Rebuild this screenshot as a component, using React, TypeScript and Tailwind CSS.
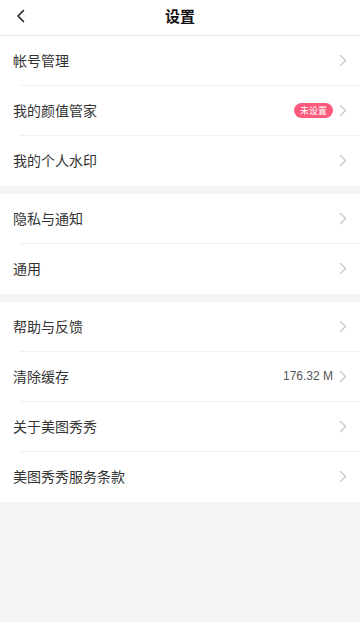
import React from 'react';

const font = { fontFamily: '"Noto Sans CJK SC", "Noto Sans", sans-serif' };

function Chevron() {
  return (
    <svg width="8" height="13" viewBox="0 0 8 13" fill="none" className="shrink-0">
      <path d="M1.5 1.5L6.5 6.5L1.5 11.5" stroke="#c8c8c8" strokeWidth="1.4" strokeLinecap="round" strokeLinejoin="round" />
    </svg>
  );
}

type Item = { label: string; extra?: React.ReactNode };

function Row({ item, last }: { item: Item; last: boolean }) {
  return (
    <div className="relative flex h-[50px] items-center pb-[2px] pl-[13px] pr-[13px]">
      <span className="flex-1 text-[14px] text-[#333]">{item.label}</span>
      {item.extra}
      <div className="ml-[6px]"><Chevron /></div>
      {!last && <div className="absolute bottom-0 left-[20px] right-0 h-px bg-[#f0f0f0]" />}
    </div>
  );
}

function Section({ items }: { items: Item[] }) {
  return (
    <div className="bg-white">
      {items.map((it, i) => (
        <Row key={it.label} item={it} last={i === items.length - 1} />
      ))}
    </div>
  );
}

export default function App() {
  const badge = (
    <span className="flex h-[15px] items-center rounded-full bg-[#fd5a7c] px-[6px] text-[9px] leading-none text-white">未设置</span>
  );
  const cache = <span className="text-[12px] text-[#555]" style={{ fontFamily: '"Liberation Sans", sans-serif' }}>176.32 M</span>;

  return (
    <div className="flex h-[622px] w-[360px] flex-col bg-[#f4f4f4]" style={font}>
      <header className="relative flex h-[36px] shrink-0 items-center justify-center border-b border-[#e8e8e8] bg-white pb-[2px]">
        <svg width="10" height="14" viewBox="0 0 10 14" fill="none" className="absolute left-[16px] top-[9px]">
          <path d="M7.5 1.5L2 7L7.5 12.5" stroke="#222" strokeWidth="1.6" strokeLinecap="round" strokeLinejoin="round" />
        </svg>
        <h1 className="text-[15px] font-bold text-[#111]">设置</h1>
      </header>
      <Section items={[{ label: '帐号管理' }, { label: '我的颜值管家', extra: badge }, { label: '我的个人水印' }]} />
      <div className="h-[8px] shrink-0" />
      <Section items={[{ label: '隐私与通知' }, { label: '通用' }]} />
      <div className="h-[8px] shrink-0" />
      <Section items={[{ label: '帮助与反馈' }, { label: '清除缓存', extra: cache }, { label: '关于美图秀秀' }, { label: '美图秀秀服务条款' }]} />
    </div>
  );
}
